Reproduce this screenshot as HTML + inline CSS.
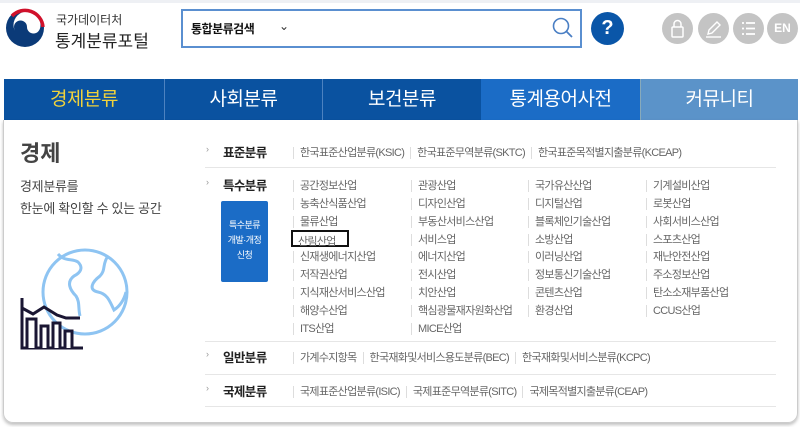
<!DOCTYPE html>
<html><head><meta charset="utf-8"><style>
*{margin:0;padding:0;box-sizing:border-box}
body{width:800px;height:427px;overflow:hidden;background:#fff;font-family:"Liberation Sans","Noto Sans CJK KR",sans-serif;position:relative;color:#333}
.abs{position:absolute}
.tab{position:absolute;top:79px;height:41px;color:#fff;font-size:19px;text-align:center;line-height:41px;letter-spacing:-0.5px}
.row{position:absolute;left:205px;width:571px;border-bottom:1px solid #e6e6e6}
.lab{position:absolute;left:223px;font-size:12.5px;font-weight:bold;color:#222;letter-spacing:-0.6px}
.chev{position:absolute;left:206px;font-size:9px;color:#999}
.it{position:absolute;font-size:11px;color:#666;white-space:nowrap;padding-left:6px;border-left:1px solid #ddd;line-height:12px;letter-spacing:-0.7px}
.ln{position:absolute;left:293px;font-size:11px;color:#666;white-space:nowrap;line-height:12px;letter-spacing:-0.7px}
.ln span{border-left:1px solid #ddd;padding-left:6px;margin-right:6px}
</style></head><body>
<div class="abs" style="left:0;top:0;width:800px;height:3px;background:#eef0f4"></div>
<svg class="abs" style="left:0;top:0" width="50" height="56" viewBox="0 0 50 56">
<circle cx="25" cy="28" r="19" fill="#0b3a78"/>
<circle cx="27" cy="25" r="13.5" fill="#fff"/>
<path d="M12 16 A18 18 0 0 1 43 27" stroke="#d0112b" stroke-width="3.5" fill="none"/>
<path d="M14 27 A6.5 6.5 0 0 1 27 27 A6.5 6.5 0 0 0 40 27 A13 13 0 0 1 14 27Z" fill="#0b3a78"/>
</svg>
<div class="abs" style="left:56px;top:11px;font-size:12px;color:#333">국가데이터처</div>
<div class="abs" style="left:55px;top:27px;font-size:17px;color:#222">통계분류포털</div>
<div class="abs" style="left:181px;top:9px;width:401px;height:39px;border:2px solid #5a8fd0;background:#fff"></div>
<div class="abs" style="left:191px;top:20px;font-size:12px;font-weight:bold;color:#111;letter-spacing:-0.5px">통합분류검색</div>
<div class="abs" style="left:279px;top:19px;font-size:12px;color:#333">⌄</div>
<svg class="abs" style="left:551px;top:16px" width="24" height="24" viewBox="0 0 24 24"><circle cx="10" cy="10" r="7.5" fill="none" stroke="#4a7fc4" stroke-width="1.6"/><path d="M15.5 15.5 L21 21" stroke="#4a7fc4" stroke-width="1.8"/></svg>
<div class="abs" style="left:591px;top:12px;width:33px;height:33px;border-radius:50%;background:#0a56a8;color:#fff;font-weight:bold;font-size:20px;text-align:center;line-height:33px">?</div>
<div class="abs" style="left:662px;top:13px;width:31px;height:31px;border-radius:50%;background:#c4c4c4"></div>
<svg class="abs" style="left:662px;top:13px" width="31" height="31"><rect x="10" y="14" width="11" height="10" rx="1" fill="none" stroke="#fff" stroke-width="1.5"/><path d="M12 14 V11 A3.5 3.5 0 0 1 19 11 V14" fill="none" stroke="#fff" stroke-width="1.5"/></svg>
<div class="abs" style="left:698px;top:13px;width:31px;height:31px;border-radius:50%;background:#c4c4c4"></div>
<svg class="abs" style="left:698px;top:13px" width="31" height="31"><path d="M10 21 L11 17 L19 9 L22 12 L14 20 Z" fill="none" stroke="#fff" stroke-width="1.4"/><path d="M8 24 H23" stroke="#fff" stroke-width="1.4"/></svg>
<div class="abs" style="left:733px;top:13px;width:31px;height:31px;border-radius:50%;background:#c4c4c4"></div>
<svg class="abs" style="left:733px;top:13px" width="31" height="31"><g stroke="#fff" stroke-width="1.8"><path d="M9 10h2M13 10h9M9 15.5h2M13 15.5h9M9 21h2M13 21h9"/></g></svg>
<div class="abs" style="left:767px;top:13px;width:31px;height:31px;border-radius:50%;background:#c4c4c4;color:#fff;font-weight:bold;font-size:12px;text-align:center;line-height:31px">EN</div>

<div class="tab" style="left:4px;width:160px;background:#0a52a0;color:#f0d23c">경제분류</div>
<div class="tab" style="left:164px;width:158px;background:#0a52a0;border-left:1px solid #4d82c0">사회분류</div>
<div class="tab" style="left:322px;width:159px;background:#0a52a0;border-left:1px solid #4d82c0">보건분류</div>
<div class="tab" style="left:481px;width:159px;background:#1b6cc6">통계용어사전</div>
<div class="tab" style="left:640px;width:158px;background:#5b93c9;border-left:1px solid #8ab">커뮤니티</div>

<div class="abs" style="left:3px;top:120px;width:795px;height:303px;border:1px solid #ccc;border-top:none;border-radius:0 0 10px 10px;box-shadow:0 2px 3px rgba(0,0,0,.25)"></div>
<div class="abs" style="left:20px;top:136px;font-size:22px;font-weight:bold;color:#444">경제</div>
<div class="abs" style="left:20px;top:176px;font-size:13px;color:#444;line-height:22px;letter-spacing:-0.3px">경제분류를<br>한눈에 확인할 수 있는 공간</div>
<svg class="abs" style="left:10px;top:240px" width="130" height="120" viewBox="0 0 130 120">
<circle cx="75" cy="52" r="42" fill="none" stroke="#8ec4f2" stroke-width="3"/>
<path d="M48 14 C55 22 62 18 68 22 C74 28 70 33 64 36 C56 42 60 50 66 56 C70 62 68 68 70 76" fill="none" stroke="#8ec4f2" stroke-width="3"/>
<path d="M98 16 C92 24 96 30 90 36 C82 42 78 50 88 52 C98 54 100 62 104 70 C110 66 114 60 116 52" fill="none" stroke="#8ec4f2" stroke-width="3"/>
<path d="M12 58 V108 H73" stroke="#1a1633" stroke-width="3" fill="none"/>
<path d="M12 68 L23 74 L34 67 L47 75 L56 78 H70" stroke="#1a1633" stroke-width="3" fill="none"/>
<path d="M17 108 V79 H26 V108 M31 108 V86 H38 V108 M43 108 V83 H50 V108 M55 108 V91 H62 V108" stroke="#1a1633" stroke-width="3" fill="#fff"/>
</svg>

<div class="row" style="top:138px;height:30px"></div>
<div class="row" style="top:168px;height:174px"></div>
<div class="row" style="top:342px;height:33px"></div>
<div class="row" style="top:375px;height:32px"></div>
<div class="chev" style="top:144px">›</div><div class="lab" style="top:142px">표준분류</div>
<div class="chev" style="top:177px">›</div><div class="lab" style="top:175px">특수분류</div>
<div class="chev" style="top:349px">›</div><div class="lab" style="top:347px">일반분류</div>
<div class="chev" style="top:383px">›</div><div class="lab" style="top:381px">국제분류</div>
<div class="abs" style="left:221px;top:201px;width:47px;height:81px;background:#1b6cc6;border-radius:2px;color:#fff;font-size:9px;text-align:center;line-height:15px;padding-top:17px;letter-spacing:-0.5px">특수분류<br>개발·개정<br>신청</div>

<div class="ln" style="top:147px"><span>한국표준산업분류(KSIC)</span><span>한국표준무역분류(SKTC)</span><span>한국표준목적별지출분류(KCEAP)</span></div>

<div class="it" style="left:293px;top:180px">공간정보산업</div><div class="it" style="left:411px;top:180px">관광산업</div><div class="it" style="left:528px;top:180px">국가유산산업</div><div class="it" style="left:646px;top:180px">기계설비산업</div>
<div class="it" style="left:293px;top:198px">농축산식품산업</div><div class="it" style="left:411px;top:198px">디자인산업</div><div class="it" style="left:528px;top:198px">디지털산업</div><div class="it" style="left:646px;top:198px">로봇산업</div>
<div class="it" style="left:293px;top:216px">물류산업</div><div class="it" style="left:411px;top:216px">부동산서비스산업</div><div class="it" style="left:528px;top:216px">블록체인기술산업</div><div class="it" style="left:646px;top:216px">사회서비스산업</div>
<div class="abs" style="left:291px;top:230px;width:58px;height:17px;border:2px solid #111"></div>
<div class="abs" style="left:298px;top:233px;font-size:11px;color:#666;letter-spacing:-0.7px">산림산업</div>
<div class="it" style="left:411px;top:234px">서비스업</div><div class="it" style="left:528px;top:234px">소방산업</div><div class="it" style="left:646px;top:234px">스포츠산업</div>
<div class="it" style="left:293px;top:251px">신재생에너지산업</div><div class="it" style="left:411px;top:251px">에너지산업</div><div class="it" style="left:528px;top:251px">이러닝산업</div><div class="it" style="left:646px;top:251px">재난안전산업</div>
<div class="it" style="left:293px;top:269px">저작권산업</div><div class="it" style="left:411px;top:269px">전시산업</div><div class="it" style="left:528px;top:269px">정보통신기술산업</div><div class="it" style="left:646px;top:269px">주소정보산업</div>
<div class="it" style="left:293px;top:287px">지식재산서비스산업</div><div class="it" style="left:411px;top:287px">치안산업</div><div class="it" style="left:528px;top:287px">콘텐츠산업</div><div class="it" style="left:646px;top:287px">탄소소재부품산업</div>
<div class="it" style="left:293px;top:305px">해양수산업</div><div class="it" style="left:411px;top:305px">핵심광물재자원화산업</div><div class="it" style="left:528px;top:305px">환경산업</div><div class="it" style="left:646px;top:305px">CCUS산업</div>
<div class="it" style="left:293px;top:323px">ITS산업</div><div class="it" style="left:411px;top:323px">MICE산업</div>

<div class="ln" style="top:352px"><span>가계수지항목</span><span>한국재화및서비스용도분류(BEC)</span><span>한국재화및서비스분류(KCPC)</span></div>
<div class="ln" style="top:386px"><span>국제표준산업분류(ISIC)</span><span>국제표준무역분류(SITC)</span><span>국제목적별지출분류(CEAP)</span></div>
</body></html>
